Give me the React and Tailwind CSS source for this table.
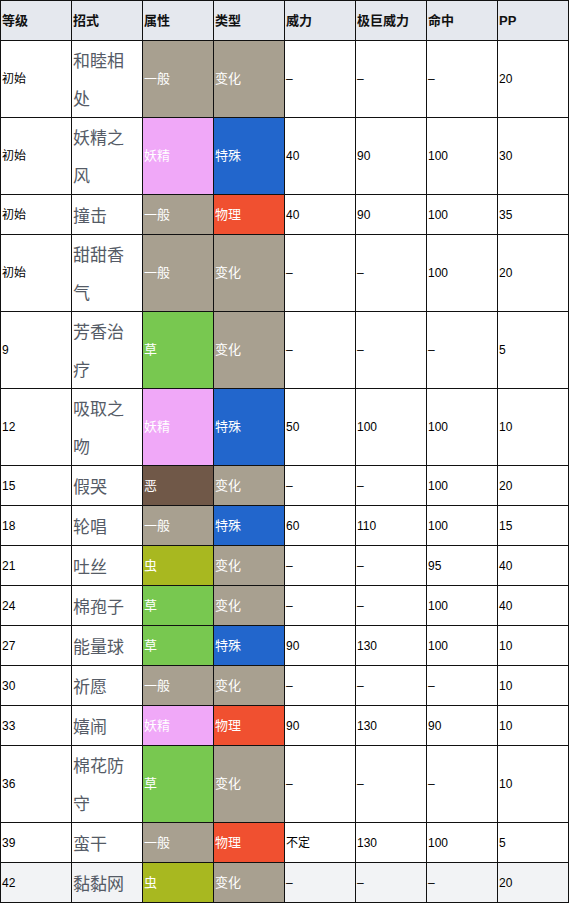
const TYPES = {
  一般: "bg-[#a8a090]",
  妖精: "bg-[#f0a8f8]",
  草: "bg-[#78c850]",
  恶: "bg-[#705848]",
  虫: "bg-[#a8b820]",
};
const CATS = {
  变化: "bg-[#a8a090]",
  特殊: "bg-[#2266cc]",
  物理: "bg-[#f05030]",
};

const rows = [
  ["初始", "和睦相处", "一般", "变化", "–", "–", "–", "20"],
  ["初始", "妖精之风", "妖精", "特殊", "40", "90", "100", "30"],
  ["初始", "撞击", "一般", "物理", "40", "90", "100", "35"],
  ["初始", "甜甜香气", "一般", "变化", "–", "–", "100", "20"],
  ["9", "芳香治疗", "草", "变化", "–", "–", "–", "5"],
  ["12", "吸取之吻", "妖精", "特殊", "50", "100", "100", "10"],
  ["15", "假哭", "恶", "变化", "–", "–", "100", "20"],
  ["18", "轮唱", "一般", "特殊", "60", "110", "100", "15"],
  ["21", "吐丝", "虫", "变化", "–", "–", "95", "40"],
  ["24", "棉孢子", "草", "变化", "–", "–", "100", "40"],
  ["27", "能量球", "草", "特殊", "90", "130", "100", "10"],
  ["30", "祈愿", "一般", "变化", "–", "–", "–", "10"],
  ["33", "嬉闹", "妖精", "物理", "90", "130", "90", "10"],
  ["36", "棉花防守", "草", "变化", "–", "–", "–", "10"],
  ["39", "蛮干", "一般", "物理", "不定", "130", "100", "5"],
  ["42", "黏黏网", "虫", "变化", "–", "–", "–", "20"],
];

const heads = ["等级", "招式", "属性", "类型", "威力", "极巨威力", "命中", "PP"];

export default function App() {
  return (
    <div className="w-[569px] bg-white" style={{ fontFamily: '"Liberation Sans", "Noto Sans CJK SC", sans-serif' }}>
      <table className="w-[569px] table-fixed border-collapse text-[12px] text-black">
        <thead>
          <tr className="bg-[#e5e8ee]">
            {heads.map((h) => (
              <th key={h} className="h-[40px] border border-[#111] px-[1px] text-left align-middle text-[13px] font-bold text-[#111]">
                {h}
              </th>
            ))}
          </tr>
        </thead>
        <tbody>
          {rows.map((r, i) => {
            const last = i === rows.length - 1;
            const bg = last ? "bg-[#f2f3f5]" : "bg-white";
            return (
              <tr key={i}>
                <td className={`h-[40px] border border-[#111] px-[1px] align-middle ${bg}`}>{r[0]}</td>
                <td className={`border border-[#111] py-0 pl-[1px] pr-[2px] align-middle text-[17px] leading-[38px] text-[#555b66] ${bg}`} style={{ fontFamily: '"Noto Sans CJK SC", sans-serif' }}>
                  {r[1]}
                </td>
                <td className={`border border-[#111] px-[1px] align-middle text-[13px] text-white ${TYPES[r[2]]}`}>{r[2]}</td>
                <td className={`border border-[#111] px-[1px] align-middle text-[13px] text-white ${CATS[r[3]]}`}>{r[3]}</td>
                <td className={`border border-[#111] px-[1px] align-middle ${bg}`}>{r[4]}</td>
                <td className={`border border-[#111] px-[1px] align-middle ${bg}`}>{r[5]}</td>
                <td className={`border border-[#111] px-[1px] align-middle ${bg}`}>{r[6]}</td>
                <td className={`border border-[#111] px-[1px] align-middle ${bg}`}>{r[7]}</td>
              </tr>
            );
          })}
        </tbody>
      </table>
    </div>
  );
}
